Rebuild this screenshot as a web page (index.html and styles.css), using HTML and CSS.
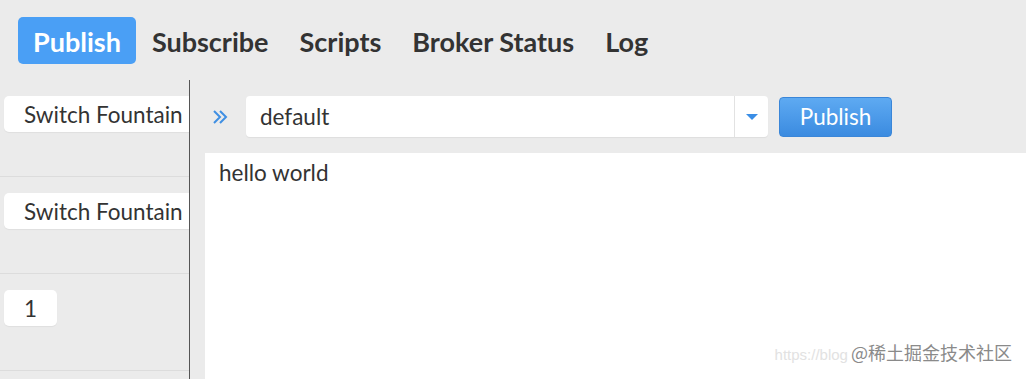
FILE: index.html
```html
<!DOCTYPE html>
<html lang="en">
<head>
  <meta charset="UTF-8">
  <title>MQTT Client</title>
  <link rel="stylesheet" href="styles.css">
</head>
<body>
  <nav class="tabs">
    <a class="tab active">Publish</a>
    <a class="tab">Subscribe</a>
    <a class="tab">Scripts</a>
    <a class="tab">Broker Status</a>
    <a class="tab">Log</a>
  </nav>

  <div class="main">
    <div class="sidebar">
      <div class="side-row"><button class="side-btn">Switch Fountain</button></div>
      <div class="side-row"><button class="side-btn">Switch Fountain</button></div>
      <div class="side-row"><button class="side-btn">1</button></div>
    </div>

    <div class="content">
      <div class="toolbar">
        <svg class="chevron" width="16" height="14" viewBox="0 0 16 14">
          <path d="M2 1l6 6-6 6M8 1l6 6-6 6" fill="none" stroke="#3f8fe3" stroke-width="2"/>
        </svg>
        <div class="topic">
          <span class="topic-value">default</span>
          <span class="topic-arrow"><span class="caret"></span></span>
        </div>
        <button class="publish-btn">Publish</button>
      </div>
      <div class="message">hello world</div>
    </div>
  </div>

  <div class="watermark">
    <span class="wm-url">https://blog</span>
    <span class="wm-name">@稀土掘金技术社区</span>
  </div>
</body>
</html>
```

FILE: styles.css
```css
body { margin: 0; background: #ebebeb; font-family: Lato, "Noto Sans", sans-serif; color: #333; height: 379px; overflow: hidden; position: relative; }

.tabs { display: flex; gap: 1px; padding: 17px 0 0 18px; height: 63px; box-sizing: border-box; }
.tab { font-size: 27px; font-weight: bold; padding: 0 15px; height: 47px; line-height: 49px; border-radius: 5px; color: #333; }
.tab.active { background: #4a9ff5; color: white; }

.main { display: flex; height: 299px; margin-top: 17px; }
.sidebar { width: 189px; border-right: 1px solid #555; overflow: hidden; flex-shrink: 0; }
.side-row { height: 97px; box-sizing: border-box; border-bottom: 1px solid #dcdcdc; padding: 16px 0 0 4px; }
.side-btn { font-family: Lato, sans-serif; font-size: 22.5px; color: #333; background: white; border: none; border-radius: 5px; height: 36px; padding: 0 20px; white-space: nowrap; box-shadow: 0 1px 1px rgba(0,0,0,0.05); }

.content { flex: 1; display: flex; flex-direction: column; }
.toolbar { display: flex; align-items: center; padding: 16px 0 0 22px; gap: 11px; }
.chevron { margin-right: 7px; }
.topic { display: flex; width: 522px; height: 41px; background: white; border-radius: 4px; box-shadow: 0 1px 1px rgba(0,0,0,0.06); }
.topic-value { flex: 1; font-size: 22.5px; line-height: 41px; padding-left: 14px; }
.topic-arrow { width: 33px; border-left: 1px solid #e2e2e2; display: flex; align-items: center; justify-content: center; }
.caret { width: 0; height: 0; border-left: 6px solid transparent; border-right: 6px solid transparent; border-top: 6px solid #3a8ee6; }
.publish-btn { font-family: Lato, sans-serif; font-size: 22.5px; color: white; width: 113px; height: 40px; border: 1px solid #3a86d8; border-radius: 4px; background: linear-gradient(#5eaaf2, #3b8be0); }

.message { margin: 16px 0 0 15px; background: white; flex: 1; font-size: 22.5px; padding: 6px 14px; }

.watermark { position: absolute; right: 14px; bottom: 14px; display: flex; align-items: baseline; gap: 3px; }
.wm-url { color: #e2e2e2; font-family: "Liberation Sans", sans-serif; font-size: 15px; }
.wm-name { color: #8a8a8a; font-family: "Noto Sans CJK SC", sans-serif; font-size: 18px; text-shadow: 0 0 2px white; }
```
